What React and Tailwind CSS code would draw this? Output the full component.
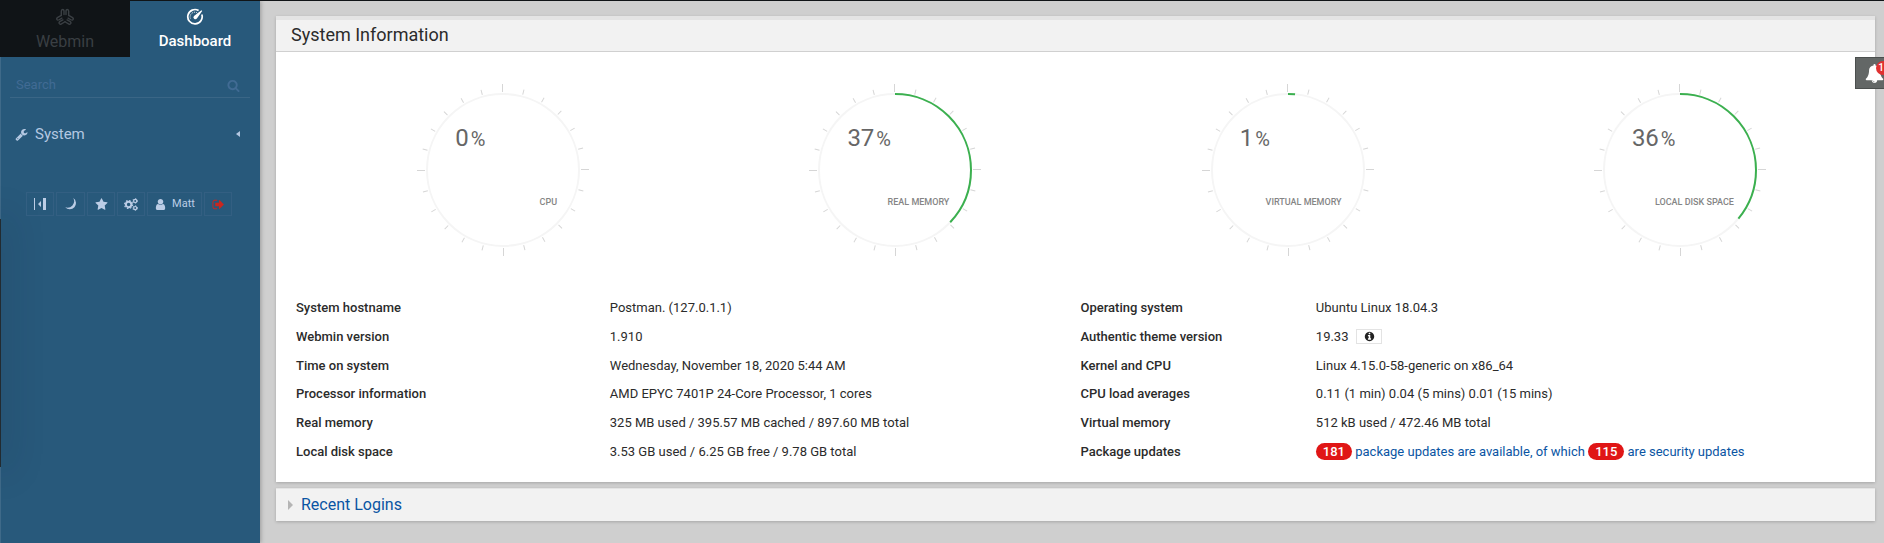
const GLYPHS = {
  star: "M1728 647q0 22-26 48l-363 354 86 500q1 7 1 20 0 21-10.500 35.500t-30.500 14.500q-19 0-40-12l-449-236-449 236q-22 12-40 12-21 0-31.500-14.500t-10.500-35.500q0-6 2-20l86-500-364-354q-25-27-25-48 0-37 56-46l502-73 225-455q19-41 49-41t49 41l225 455 502 73q56 9 56 46z",
  wrench:
    "M448 1472q0-26-19-45t-45-19-45 19-19 45 19 45 45 19 45-19 19-45zm644-420l-682 682q-37 37-90 37-52 0-91-37l-106-108q-38-36-38-90 0-53 38-91l681-681q39 98 114.500 173.500t173.500 114.500zm634-435q0 39-23 106-47 134-164.500 217.500t-258.500 83.500q-185 0-316.500-131.500t-131.500-316.500 131.500-316.500 316.500-131.500q58 0 121.500 16.500t107.500 46.500q16 11 16 28t-16 28l-293 169v224l193 107q5-3 79-48.500t135.500-81 70.500-35.500q15 0 23.500 10t8.500 25z",
  search:
    "M1216 832q0-185-131.500-316.500t-316.500-131.500-316.500 131.500-131.500 316.500 131.500 316.500 316.500 131.500 316.500-131.500 131.500-316.500zm512 832q0 52-38 90t-90 38q-54 0-90-38l-343-342q-179 124-399 124-143 0-273.500-55.500t-225-150-150-225-55.500-273.500 55.500-273.500 150-225 225-150 273.500-55.500 273.500 55.500 225 150 150 225 55.500 273.500q0 220-124 399l343 343q37 37 37 90z",
  user: "M1536 1399q0 109-62.500 187t-150.500 78h-854q-88 0-150.500-78t-62.500-187q0-85 8.500-160.500t31.500-152 58.500-131 94-89 134.500-34.500q131 128 313 128t313-128q76 0 134.500 34.500t94 89 58.500 131 31.500 152 8.500 160.500zm-256-887q0 159-112.500 271.500t-271.500 112.500-271.500-112.500-112.500-271.500 112.500-271.500 271.500-112.500 271.500 112.500 112.500 271.500z",
  signOut:
    "M704 1440q0 4 1 20t.5 26.500-3 23.500-10 19.500-20.500 6.500h-320q-119 0-203.500-84.500t-84.500-203.500v-704q0-119 84.500-203.500t203.500-84.500h320q13 0 22.500 9.500t9.500 22.500q0 4 1 20t.5 26.500-3 23.500-10 19.500-20.500 6.500h-320q-66 0-113 47t-47 113v704q0 66 47 113t113 47h312l11.500 1 11.500 3 8 5.500 7 9 2 13.500zm928-544q0 26-19 45l-544 544q-19 19-45 19t-45-19-19-45v-288h-448q-26 0-45-19t-19-45v-384q0-26 19-45t45-19h448v-288q0-26 19-45t45-19 45 19l544 544q19 19 19 45z",
  bell: "M912 1696q0-16-16-16-59 0-101.500-42.500t-42.500-101.500q0-16-16-16t-16 16q0 73 51.500 124.500t124.500 51.500q16 0 16-16zm816-288q0 52-38 90t-90 38h-448q0 106-75 181t-181 75-181-75-75-181h-448q-52 0-90-38t-38-90q50-42 91-88t85-119.500 74.500-158.500 50-206 19.500-260q0-152 117-282.500t307-158.500q-8-19-8-39 0-40 28-68t68-28 68 28 28 68q0 20-8 39 190 28 307 158.500t117 282.500q0 139 19.500 260t50 206 74.500 158.500 85 119.500 91 88z",
  info: "M1152 1376v-160q0-14-9-23t-23-9h-96v-512q0-14-9-23t-23-9h-320q-14 0-23 9t-9 23v160q0 14 9 23t23 9h96v320h-96q-14 0-23 9t-9 23v160q0 14 9 23t23 9h448q14 0 23-9t9-23zm-128-896v-160q0-14-9-23t-23-9h-192q-14 0-23 9t-9 23v160q0 14 9 23t23 9h192q14 0 23-9t9-23zm640 416q0 209-103 385.500t-279.500 279.500-385.500 103-385.500-103-279.500-279.500-103-385.500 103-385.500 279.500-279.500 385.500-103 385.500 103 279.500 279.500 103 385.500z",
};

function Glyph({ name, className }) {
  return (
    <svg viewBox="0 0 1792 1792" fill="currentColor" aria-hidden="true" className={className}>
      <path d={GLYPHS[name]} />
    </svg>
  );
}

function WebminLogo() {
  const lobe = "M-3.700 -2.100 V-6.200 Q-3.700 -8 -2.300 -8 Q-1 -8 -1 -6.200 V-3 M3.700 -2.100 V-6.200 Q3.700 -8 2.300 -8 Q1 -8 1 -6.200 V-3";
  return (
    <svg viewBox="-9 -9.500 18 17" className="h-[17px] w-[18px]" fill="none" stroke="currentColor" strokeWidth="1.400" strokeLinejoin="round" strokeLinecap="round" aria-hidden="true">
      <path d={lobe} />
      <path d={lobe} transform="rotate(120)" />
      <path d={lobe} transform="rotate(240)" />
    </svg>
  );
}

function GaugeIcon() {
  return (
    <svg viewBox="0 0 18 18" className="size-[18px]" fill="none" stroke="currentColor" aria-hidden="true">
      <path d="M12.600 2.500 A7.200 7.200 0 1 0 15.800 6.400" strokeWidth="1.700" />
      <path d="M4.300 10.500 A4.800 4.800 0 0 1 11 4.700" strokeWidth="1" strokeDasharray="1 1" />
      <path d="M15.400 2.200 L16.200 3 L10.900 10.600 A1.900 1.900 0 1 1 8 7.900 Z" fill="currentColor" stroke="none" />
    </svg>
  );
}

function CollapseIcon() {
  return (
    <svg viewBox="0 0 12 12" className="size-3" fill="currentColor" aria-hidden="true">
      <path d="M0 0h1v12H0zM9 0h3v12H9zM4 6l3-3v6z" />
    </svg>
  );
}

function MoonIcon() {
  return (
    <svg viewBox="0 0 12 12" className="size-3" fill="currentColor" aria-hidden="true">
      <path d="M8.300 0 A6.200 6.200 0 1 1 .2 9.300 A6.600 6.600 0 0 0 8.300 0z" />
    </svg>
  );
}

function CogsIcon() {
  return (
    <svg viewBox="0 0 14 13" className="h-[13px] w-[14px]" fill="none" stroke="currentColor" aria-hidden="true">
      <circle cx="4.600" cy="6.500" r="2.700" strokeWidth="1.900" />
      <circle cx="4.600" cy="6.500" r="4" strokeWidth="1.200" strokeDasharray="1.570 1.570" />
      <circle cx="11.200" cy="2.900" r="1.600" strokeWidth="1.200" />
      <circle cx="11.200" cy="2.900" r="2.400" strokeWidth=".8" strokeDasharray="1.250 1.250" />
      <circle cx="11.200" cy="10.100" r="1.600" strokeWidth="1.200" />
      <circle cx="11.200" cy="10.100" r="2.400" strokeWidth=".8" strokeDasharray="1.250 1.250" />
    </svg>
  );
}

const TICKS = Array.from({ length: 24 }, (_, i) => i);

function Gauge({ value, share = value, label }) {
  const r = 76;
  const length = 2 * Math.PI * r;
  return (
    <div className="grid flex-1 justify-center pl-8">
      <svg viewBox="-87 -87 174 174" className="col-start-1 row-start-1 size-[174px]" aria-hidden="true">
        {TICKS.map((i) => (
          <rect key={i} x="-1" y={i % 6 ? -83 : -86} width="1" height={i % 6 ? 5 : 8} fill="#d6d6d6" transform={`rotate(${i * 15})`} />
        ))}
        <circle r={r} fill="none" stroke="#f5f5f5" strokeWidth="2" />
        {share > 0 && (
          <circle r={r} fill="none" stroke="#3bb04f" strokeWidth="2" strokeDasharray={`${(length * share) / 100} ${length}`} transform="rotate(-90)" />
        )}
      </svg>
      <div className="col-start-1 row-start-1 flex flex-col justify-between pt-[41px] pr-[33px] pb-[47px] pl-[39px]">
        <p className="text-2xl leading-7 text-[#666]">
          {value}
          <span className="pl-[2px] text-xl leading-7">%</span>
        </p>
        <p className="text-right text-[9px] leading-4 font-medium text-[#858585] uppercase">{label}</p>
      </div>
    </div>
  );
}

function Count({ children }) {
  return <span className="inline-block rounded-full bg-[#e01616] px-[7px] text-[13px] leading-[17px] font-medium text-white">{children}</span>;
}

const ROWS = [
  ["System hostname", "Postman. (127.0.1.1)", "Operating system", "Ubuntu Linux 18.04.3"],
  [
    "Webmin version",
    "1.910",
    "Authentic theme version",
    <span className="flex items-center gap-2">
      19.33
      <button type="button" aria-label="Theme information" className="flex h-[15px] w-[26px] items-center justify-center border border-[#e3e3e3] text-[#222]">
        <Glyph name="info" className="size-[11px]" />
      </button>
    </span>,
  ],
  ["Time on system", "Wednesday, November 18, 2020 5:44 AM", "Kernel and CPU", "Linux 4.15.0-58-generic on x86_64"],
  ["Processor information", "AMD EPYC 7401P 24-Core Processor, 1 cores", "CPU load averages", "0.11 (1 min) 0.04 (5 mins) 0.01 (15 mins)"],
  ["Real memory", "325 MB used / 395.57 MB cached / 897.60 MB total", "Virtual memory", "512 kB used / 472.46 MB total"],
  [
    "Local disk space",
    "3.53 GB used / 6.25 GB free / 9.78 GB total",
    "Package updates",
    <a href="#updates" className="text-[#0a55a3]">
      <Count>181</Count> package updates are available, of which <Count>115</Count> are security updates
    </a>,
  ],
];

function ToolButton({ label, children, className = "w-7" }) {
  return (
    <button type="button" aria-label={label} className={`flex h-6 items-center justify-center border border-[#335f82] text-[#bccde6] ${className}`}>
      {children}
    </button>
  );
}

function Sidebar() {
  return (
    <aside className="relative z-10 flex w-[260px] shrink-0 flex-col overflow-hidden bg-[#28597b] shadow-[1px_0_4px_rgba(0,0,0,0.25)]">
      <div className="absolute inset-y-0 left-0 w-px bg-[#3f6a89]" />
      <div className="absolute top-[218px] left-0 h-[248px] w-px bg-[#222b31] shadow-[0_0_36px_4px_rgba(20,30,45,0.3)]" />
      <nav className="relative flex h-14">
        <a href="#webmin" className="flex flex-1 flex-col items-center bg-[#101417] pt-[7px] text-base leading-6 text-[#3a3f43]">
          <WebminLogo />
          <span className="pt-[5px]">Webmin</span>
        </a>
        <a href="#dashboard" className="flex flex-1 flex-col items-center pt-[7px] text-[15px] leading-6 font-medium text-white">
          <GaugeIcon />
          <span className="pt-[3px]">Dashboard</span>
        </a>
      </nav>
      <label className="relative mx-[10px] mt-4 flex h-[25px] items-center border-b border-[#3a6686] pr-[10px] pl-[6px] text-[#416b94]">
        <input type="search" placeholder="Search" aria-label="Search" className="min-w-0 flex-1 bg-transparent text-[13px] outline-none placeholder:text-[#416b94]" />
        <Glyph name="search" className="size-[13px]" />
      </label>
      <button type="button" className="relative mt-6 flex h-6 items-center pr-5 pl-[15px] text-left text-[15px] text-[#b4c8e2]">
        <Glyph name="wrench" className="size-[13px]" />
        <span className="flex-1 pl-[7px]">System</span>
        <svg viewBox="0 0 4 6" className="h-[6px] w-1" fill="currentColor" aria-hidden="true">
          <path d="M4 0v6L0 3z" />
        </svg>
      </button>
      <div className="relative mt-[46px] flex gap-[2px] pl-[26px]">
        <ToolButton label="Collapse menu"><CollapseIcon /></ToolButton>
        <ToolButton label="Night mode" className="w-[29px]"><MoonIcon /></ToolButton>
        <ToolButton label="Favorites"><Glyph name="star" className="size-[13px]" /></ToolButton>
        <ToolButton label="Theme configuration"><CogsIcon /></ToolButton>
        <ToolButton label="Matt" className="w-[55px] gap-[5px] text-[11px]">
          <Glyph name="user" className="size-[13px]" />
          Matt
        </ToolButton>
        <ToolButton label="Log out"><Glyph name="signOut" className="size-[13px] text-[#c9271f]" /></ToolButton>
      </div>
    </aside>
  );
}

export default function App() {
  return (
    <div className="relative flex min-h-screen overflow-x-hidden border-t border-[#101417] bg-[#cfcfcf] font-['Roboto',sans-serif] text-[#2b2b2b]">
      <Sidebar />
      <main className="min-w-0 flex-1 pt-[15px] pr-[9px] pl-4">
        <section className="bg-white shadow-[0_1px_3px_rgba(0,0,0,0.2)]">
          <h1 className="border-t-4 border-b border-t-[#e4e4e4] border-b-[#d0d0d0] bg-[#f2f2f2] px-[15px] pb-[2px] text-lg leading-[29px]">System Information</h1>
          <div className="px-[15px] pt-[31px] pb-4">
            <div className="flex">
              <Gauge value={0} label="CPU" />
              <Gauge value={37} label="Real memory" />
              <Gauge value={1} share={1.5} label="Virtual memory" />
              <Gauge value={36} label="Local disk space" />
            </div>
            <table className="mt-[37px] h-[172px] w-full table-fixed text-[13px] leading-[18px]">
              <colgroup>
                <col className="w-[20%]" />
                <col className="w-[30%]" />
                <col className="w-[15%]" />
                <col className="w-[35%]" />
              </colgroup>
              <tbody>
                {ROWS.map(([a, b, c, d]) => (
                  <tr key={a}>
                    <th scope="row" className="px-[5px] text-left font-medium">{a}</th>
                    <td className="px-[5px]">{b}</td>
                    <th scope="row" className="px-[5px] text-left font-medium">{c}</th>
                    <td className="px-[5px]">{d}</td>
                  </tr>
                ))}
              </tbody>
            </table>
          </div>
        </section>
        <section className="mt-[6px] border-t border-[#e4e4e4] bg-[#f2f2f2] shadow-[0_1px_3px_rgba(0,0,0,0.2)]">
          <h2 className="text-base leading-8">
            <button type="button" className="flex w-full items-center gap-2 px-3 text-left text-[#0a55a3]">
              <svg viewBox="0 0 5 10" className="h-[10px] w-[5px]" fill="#b5b5b5" aria-hidden="true">
                <path d="M0 0v10l5-5z" />
              </svg>
              Recent Logins
            </button>
          </h2>
        </section>
      </main>
      <button type="button" aria-label="Notifications" className="absolute top-14 right-0 z-20 flex h-8 w-[29px] items-start border border-r-0 border-[#4b4f4e] bg-[#636766] pt-[6px] pl-[9px] text-white">
        <Glyph name="bell" className="size-[19px] shrink-0" />
        <span className="absolute top-[3px] right-0 h-[14px] w-2 rounded-l-full bg-[#e03131] text-right text-[10px] leading-[14px] font-medium">1</span>
      </button>
    </div>
  );
}
